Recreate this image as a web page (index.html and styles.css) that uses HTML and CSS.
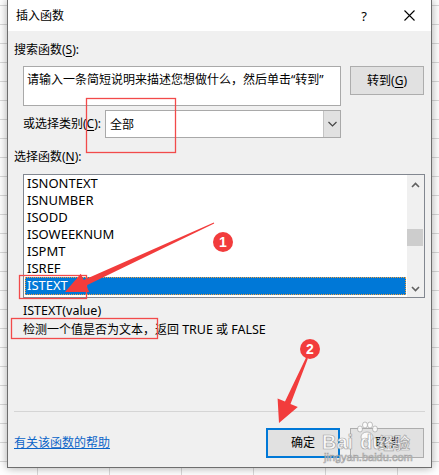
FILE: index.html
```html
<!DOCTYPE html>
<html lang="zh-CN">
<head>
<meta charset="utf-8">
<title>插入函数</title>
<link rel="stylesheet" href="styles.css">
</head>
<body>
<div class="dialog">
  <div class="titlebar">
    <span class="title">插入函数</span>
    <span class="tb-btn help">?</span>
    <span class="tb-btn close">
      <svg width="11" height="11" viewBox="0 0 11 11"><path d="M0.5 0.5L10.5 10.5M10.5 0.5L0.5 10.5" stroke="#000" stroke-width="1.1" fill="none"/></svg>
    </span>
  </div>
  <div class="content">
    <div class="lbl">搜索函数(<u>S</u>):</div>
    <div class="search-row">
      <div class="search-box">请输入一条简短说明来描述您想做什么，然后单击“转到”</div>
      <div class="btn go">转到(<u>G</u>)</div>
    </div>
    <div class="cat-row">
      <span class="cat-lbl">或选择类别(<u>C</u>):</span>
      <div class="select">
        <span class="sel-val">全部</span>
        <span class="dd"><svg width="9" height="6" viewBox="0 0 9 6"><path d="M0.5 1L4.5 5L8.5 1" stroke="#444" stroke-width="1.2" fill="none"/></svg></span>
      </div>
    </div>
    <div class="lbl lbl2">选择函数(<u>N</u>):</div>
    <div class="listbox">
      <ul class="items">
        <li>ISNONTEXT</li>
        <li>ISNUMBER</li>
        <li>ISODD</li>
        <li>ISOWEEKNUM</li>
        <li>ISPMT</li>
        <li>ISREF</li>
        <li class="selected">ISTEXT</li>
      </ul>
      <div class="scrollbar">
        <div class="sb-arrow"><svg width="9" height="6" viewBox="0 0 9 6"><path d="M1 5L4.5 1.5L8 5" stroke="#606060" stroke-width="1.6" fill="none"/></svg></div>
        <div class="sb-track"><div class="thumb"></div></div>
        <div class="sb-arrow"><svg width="9" height="6" viewBox="0 0 9 6"><path d="M1 1L4.5 4.5L8 1" stroke="#606060" stroke-width="1.6" fill="none"/></svg></div>
      </div>
    </div>
    <div class="sig">ISTEXT(value)</div>
    <div class="desc">检测一个值是否为文本，返回 <span class="en">TRUE</span> 或 <span class="en">FALSE</span></div>
    <div class="spacer"></div>
    <div class="sep"></div>
    <div class="footer">
      <a class="help-link" href="#">有关该函数的帮助</a>
      <div class="btn ok">确定</div>
      <div class="btn cancel">取消</div>
    </div>
  </div>
</div>

<svg class="annot" width="439" height="475" viewBox="0 0 439 475">
  <rect x="86.5" y="98.5" width="89" height="54" fill="none" stroke="#f24a4a" stroke-width="1.3"/>
  <rect x="19.5" y="275.5" width="67" height="23" fill="none" stroke="#f24a4a" stroke-width="1.3"/>
  <rect x="11.5" y="318.5" width="146" height="20" fill="none" stroke="#f24a4a" stroke-width="1.3"/>
  <polygon points="213.8,222.5 83.7,280.1 80.8,273.7 65,292 89.2,291.9 86.3,285.5 214.2,223.5" fill="#f23c3c"/>
  <circle cx="223" cy="242" r="10" fill="#f23c3c"/>
  <text x="223" y="247" class="num">1</text>
  <polygon points="306.1,357.6 285,401.6 277.6,398.5 279,423 297.8,407.1 290.5,404 307.9,358.4" fill="#f23c3c"/>
  <circle cx="310" cy="349" r="10" fill="#f23c3c"/>
  <text x="310" y="354" class="num">2</text>
  <g class="wm">
    <text x="322" y="449" class="wm-big">Bai</text>
    <g class="paw">
      <ellipse cx="367" cy="437" rx="6" ry="5"/>
      <ellipse cx="360" cy="429" rx="2.5" ry="3"/>
      <ellipse cx="365" cy="425" rx="2.5" ry="3"/>
      <ellipse cx="370" cy="425" rx="2.5" ry="3"/>
      <ellipse cx="375" cy="429" rx="2.5" ry="3"/>
    </g>
    <text x="360" y="449" class="wm-big">du</text>
    <text x="378" y="449" class="wm-cn">经验</text>
    <text x="324" y="461" class="wm-small">jingyan.baidu.com</text>
  </g>
</svg>
</body>
</html>
```
FILE: styles.css
```css
* { box-sizing: border-box; }
html, body { margin: 0; padding: 0; }
body {
  width: 439px;
  height: 475px;
  overflow: hidden;
  position: relative;
  font-family: "Noto Sans", "Noto Sans CJK SC", sans-serif;
  font-size: 12px;
  color: #000;
  background-color: #fff;
  background-image:
    linear-gradient(#d9d9d9 1px, transparent 1px),
    linear-gradient(90deg, #d9d9d9 1px, transparent 1px);
  background-size: 72px 19px;
  background-position: 37px 5px;
}
u { text-decoration: underline; text-underline-offset: 2px; }

.dialog {
  margin-left: 7px;
  width: 425px;
  height: 468px;
  border: 1px solid #6e6e6e;
  border-top: none;
  background: #f0f0f0;
  box-shadow: 0 0 9px rgba(0, 0, 0, 0.35);
  display: flex;
  flex-direction: column;
}

.titlebar {
  height: 31px;
  flex: none;
  background: #fff;
  display: flex;
  align-items: center;
  padding: 0 12px 0 8px;
}
.title { flex: 1; font-size: 12px; line-height: 16px; }
.tb-btn {
  width: 20px;
  height: 20px;
  display: flex;
  align-items: center;
  justify-content: center;
}
.help { font-size: 13px; margin-right: 25px; }

.content {
  flex: 1;
  display: flex;
  flex-direction: column;
  padding: 11px 6px 9px;
}
.lbl { line-height: 16px; }
.lbl2 { margin-top: 11px; }

.search-row {
  margin-top: 8px;
  padding-left: 9px;
  display: flex;
  gap: 9px;
  align-items: flex-start;
}
.search-box {
  width: 318px;
  height: 40px;
  background: #fff;
  border: 1px solid #a9a9a9;
  padding: 5px 0 0 3px;
  line-height: 16px;
  white-space: nowrap;
  overflow: hidden;
}
.btn {
  width: 74px;
  height: 29px;
  background: #e1e1e1;
  border: 1px solid #adadad;
  display: flex;
  align-items: center;
  justify-content: center;
  line-height: 16px;
}

.cat-row {
  margin-top: 4px;
  padding-left: 9px;
  display: flex;
  align-items: center;
}
.cat-lbl { width: 82px; line-height: 16px; }
.select {
  width: 236px;
  height: 28px;
  background: #fff;
  border: 1px solid #a9a9a9;
  display: flex;
  align-items: stretch;
}
.sel-val { flex: 1; padding-left: 4px; display: flex; align-items: center; }
.dd {
  width: 17px;
  background: #e1e1e1;
  border-left: 1px solid #c4c4c4;
  display: flex;
  align-items: center;
  justify-content: center;
}

.listbox {
  margin-top: 9px;
  margin-left: 9px;
  width: 402px;
  height: 124px;
  border: 1px solid #828790;
  background: #fff;
  display: flex;
}
.items {
  list-style: none;
  margin: 0;
  padding: 0;
  flex: 1;
  font-size: 13px;
}
.items li {
  height: 17px;
  line-height: 17px;
  padding-left: 3px;
}
.items li.selected {
  margin: 0 1px;
  height: 18px;
  padding-left: 2px;
  background: #0078d7;
  color: #fff;
  outline: 1px dotted #f0a040;
  outline-offset: -1px;
}
.scrollbar {
  width: 17px;
  background: #f0f0f0;
  display: flex;
  flex-direction: column;
}
.sb-arrow {
  height: 17px;
  display: flex;
  align-items: center;
  justify-content: center;
}
.sb-arrow:first-child { padding-top: 2px; }
.sb-track { flex: 1; }
.thumb {
  margin-top: 37px;
  height: 17px;
  margin-right: 1px;
  background: #cdcdcd;
}

.sig { margin-top: 3px; padding-left: 9px; line-height: 19px; font-size: 12.5px; }
.desc { padding-left: 9px; line-height: 19px; }
.en { font-size: 12.5px; }
.spacer { flex: 1; }
.sep { height: 1px; background: #d5d5d5; }

.footer {
  margin-top: 16px;
  display: flex;
  align-items: center;
  gap: 10px;
  padding-right: 1px;
}
.help-link { color: #0a64c8; text-decoration: underline; line-height: 16px; }
.footer .ok { margin-left: auto; height: 30px; border: 2px solid #0078d7; }
.footer .cancel { height: 30px; }

.annot {
  position: absolute;
  left: 0;
  top: 0;
  pointer-events: none;
}
.num {
  fill: #fff;
  font-family: "Liberation Sans", sans-serif;
  font-weight: bold;
  font-size: 14px;
  text-anchor: middle;
}
.wm { opacity: 0.85; }
.wm text, .paw ellipse { fill: #fff; stroke: #9a9a9a; stroke-width: 0.7; }
.wm-big { font-family: "Liberation Sans", sans-serif; font-weight: bold; font-size: 20px; }
.wm-cn { font-family: "Noto Sans CJK SC", sans-serif; font-weight: bold; font-size: 16px; }
.wm-small { font-family: "Liberation Sans", sans-serif; font-size: 11px; stroke-width: 0.4; }
```
